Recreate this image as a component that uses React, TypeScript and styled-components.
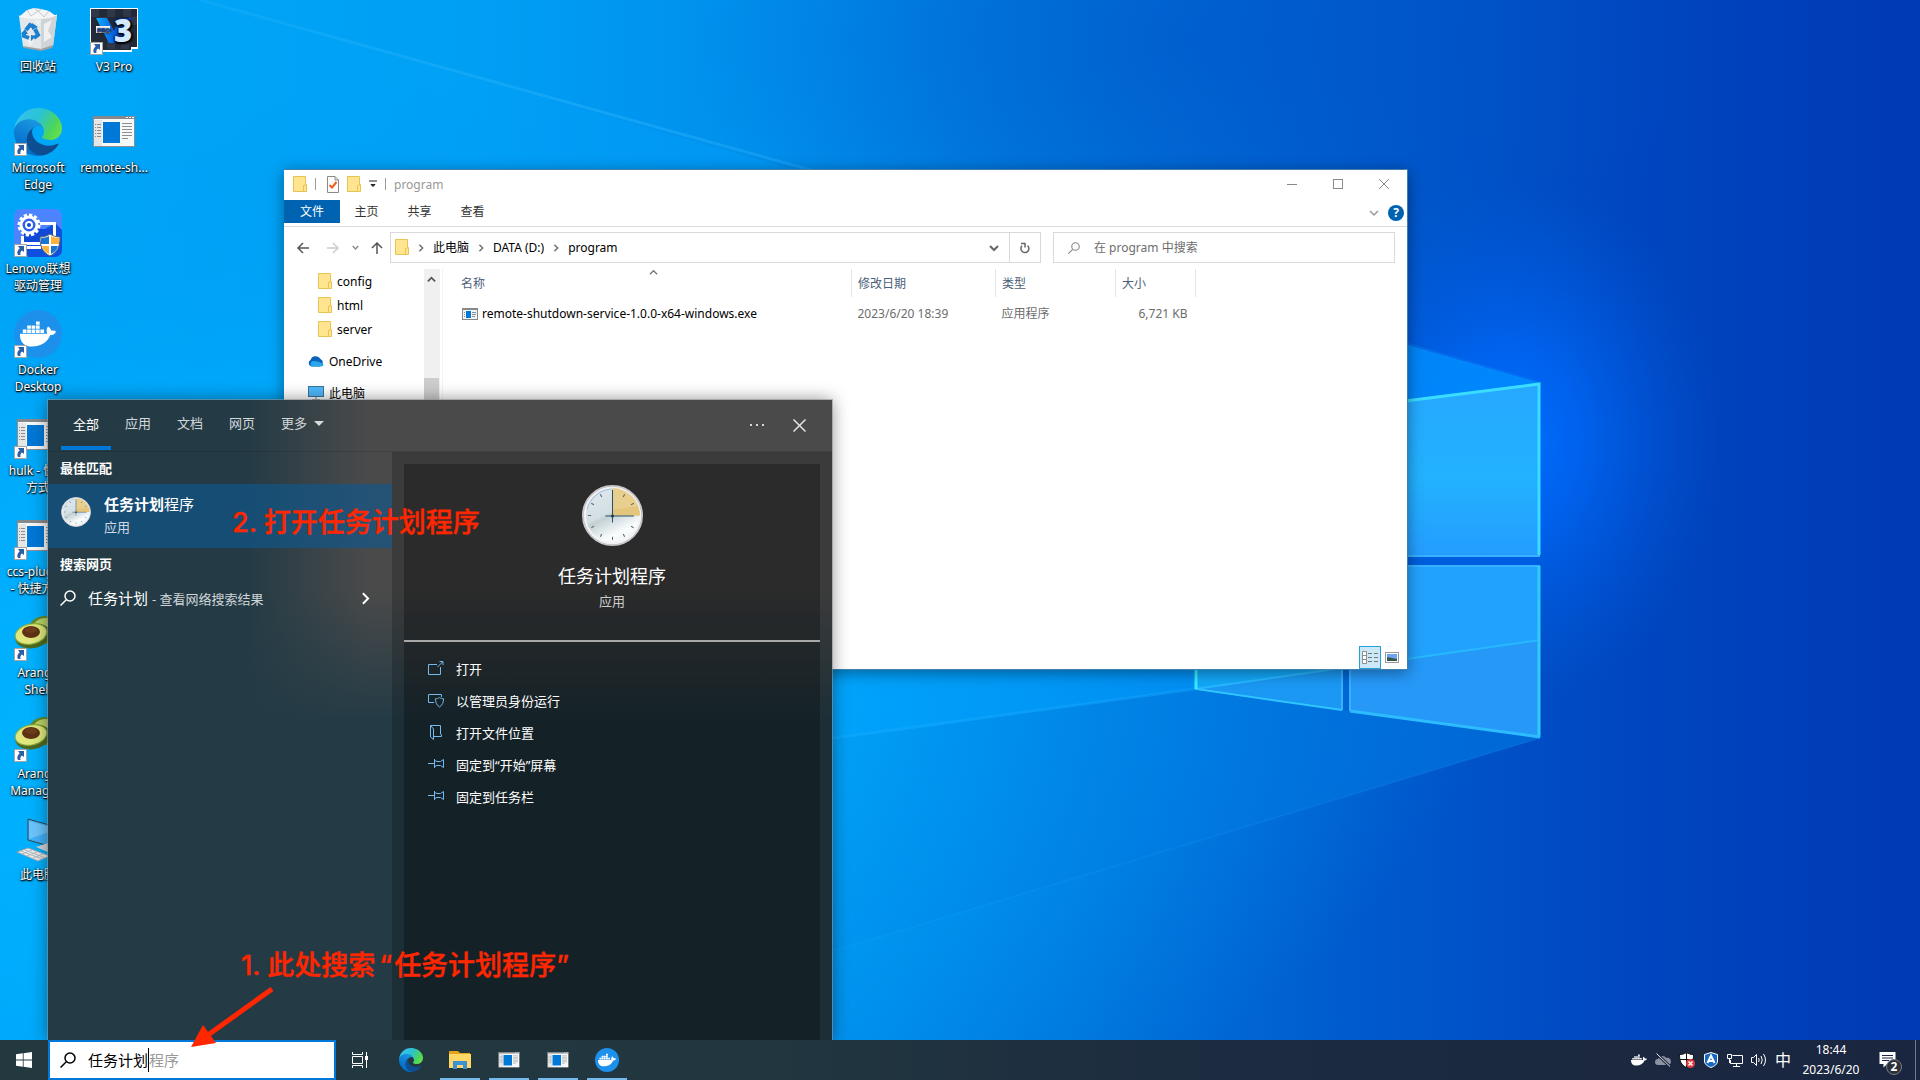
import React from 'react';
import styled, { createGlobalStyle } from 'styled-components';
import { FaDocker } from 'react-icons/fa';

const GlobalStyle = createGlobalStyle`
  *, *::before, *::after { box-sizing: border-box; }
  body { margin: 0; font-family: "Noto Sans", "Noto Sans CJK SC", sans-serif; font-size: 12px; line-height: 17px; overflow: hidden; }
  button, input { font: inherit; color: inherit; }
  button { background: none; border: 0; padding: 0; margin: 0; text-align: inherit; }
  svg { display: block; flex: none; }
`;

/* ---------- wallpaper ---------- */

const WallpaperSvg = styled.svg`
  position: absolute;
  inset: 0;
  width: 100%;
  height: 100%;
`;

const Wallpaper = () => (
  <WallpaperSvg viewBox="0 0 1920 1080" preserveAspectRatio="xMidYMid slice" aria-hidden="true">
    <defs>
      <linearGradient id="sky" x1="0" y1="0" x2="1" y2="0">
        <stop offset="0" stopColor="#00a8f8" />
        <stop offset="0.25" stopColor="#009ff4" />
        <stop offset="0.42" stopColor="#008cea" />
        <stop offset="0.55" stopColor="#0076dc" />
        <stop offset="0.7" stopColor="#005cce" />
        <stop offset="0.85" stopColor="#0046c0" />
        <stop offset="1" stopColor="#003ab4" />
      </linearGradient>
      <radialGradient id="leftLight" gradientUnits="userSpaceOnUse" cx="0" cy="0" r="1" gradientTransform="translate(260 720) rotate(-6) scale(1250 620)">
        <stop offset="0" stopColor="#00b6ff" />
        <stop offset="0.45" stopColor="#00acfd" stopOpacity="0.8" />
        <stop offset="1" stopColor="#0094f0" stopOpacity="0" />
      </radialGradient>
      <radialGradient id="glow" gradientUnits="userSpaceOnUse" cx="0" cy="0" r="1" gradientTransform="translate(1510 440) scale(210 270)">
        <stop offset="0" stopColor="#0070ff" />
        <stop offset="0.35" stopColor="#0066f6" stopOpacity="0.8" />
        <stop offset="1" stopColor="#0058d8" stopOpacity="0" />
      </radialGradient>
      <radialGradient id="topShade" gradientUnits="userSpaceOnUse" cx="0" cy="0" r="1" gradientTransform="translate(1200 40) scale(520 260)">
        <stop offset="0" stopColor="#0054c6" stopOpacity="0.5" />
        <stop offset="1" stopColor="#0054c6" stopOpacity="0" />
      </radialGradient>
      <linearGradient id="pane" x1="0" y1="0" x2="0" y2="1">
        <stop offset="0" stopColor="#26a8ff" />
        <stop offset="0.55" stopColor="#22b2ff" />
        <stop offset="1" stopColor="#249cff" />
      </linearGradient>
      <linearGradient id="beamTop" gradientUnits="userSpaceOnUse" x1="200" y1="0" x2="1540" y2="0">
        <stop offset="0" stopColor="#40c0ff" stopOpacity="0.15" />
        <stop offset="0.3" stopColor="#30b8ff" stopOpacity="0.4" />
        <stop offset="1" stopColor="#1090ff" stopOpacity="0.2" />
      </linearGradient>
      <linearGradient id="beamLow" gradientUnits="userSpaceOnUse" x1="700" y1="0" x2="1540" y2="0">
        <stop offset="0" stopColor="#0088e8" stopOpacity="0" />
        <stop offset="1" stopColor="#0074e0" stopOpacity="0.7" />
      </linearGradient>
      <linearGradient id="beamBody" gradientUnits="userSpaceOnUse" x1="200" y1="0" x2="1540" y2="0">
        <stop offset="0" stopColor="#00a8ff" stopOpacity="0" />
        <stop offset="0.6" stopColor="#00a0ff" stopOpacity="0.5" />
        <stop offset="1" stopColor="#008cff" stopOpacity="0.85" />
      </linearGradient>
    </defs>
    <rect width="1920" height="1080" fill="url(#sky)" />
    <rect width="1920" height="1080" fill="url(#leftLight)" />
    <rect width="1920" height="1080" fill="url(#topShade)" />
    <rect width="1920" height="1080" fill="url(#glow)" />
    <path d="M200 0 L1540 383 L1195 689 L0 860 V0Z" fill="url(#beamBody)" />
    <path d="M1540 738 L1195 689 L600 772 L836 950Z" fill="url(#beamLow)" />
    <path d="M200 0 L807 169 L1540 383" fill="none" stroke="url(#beamTop)" strokeWidth="3" />
    <path d="M1195 689 L833 738 L300 812" fill="none" stroke="#20b0ff" strokeOpacity="0.3" strokeWidth="3" />
    <path d="M1540 738 L836 950 L500 1052" fill="none" stroke="#30b0ff" strokeOpacity="0.12" strokeWidth="2" />
    <path d="M1350 407 L1540 384 V557 H1350Z" fill="url(#pane)" />
    <path d="M1350 565 H1540 V738 L1350 711Z" fill="#2698f8" />
    <path d="M1350 565 H1540 V640 L1350 668Z" fill="#22a2ff" />
    <path d="M1195 565 H1342 V710 L1195 689Z" fill="#1a98f4" />
    <path d="M1195 565 H1342 V669 L1195 689Z" fill="#12a8fa" />
    <path d="M1195 689 L1342 668 M1350 667 L1540 640" stroke="#28b8ff" strokeWidth="2" />
    <path d="M1350 556 H1540 M1350 566 H1540 M1342 600 V710 M1350 600 V711" stroke="#36b0ff" strokeWidth="2" />
    <path d="M1350 408 L1539 384 V555" fill="none" stroke="#3adcff" strokeWidth="3" />
    <path d="M1539 566 V737" fill="none" stroke="#30ccff" strokeWidth="3" />
    <path d="M1540 737 L1350 711" fill="none" stroke="#2cbcff" strokeWidth="3" />
    <path d="M1342 710 L1196 689 V600" fill="none" stroke="#2fc4ff" strokeWidth="2" />
    <path d="M1196 660 V689" stroke="#32f0ff" strokeWidth="3" />
  </WallpaperSvg>
);

/* ---------- drawings ---------- */

type SizeProps = { size?: number };

const EdgeLogo = ({ size = 48 }: SizeProps) => (
  <svg width={size} height={size} viewBox="0 0 256 256" aria-hidden="true">
    <defs>
      <linearGradient id="edgeA" x1="0.2" y1="0.5" x2="1" y2="0.6">
        <stop offset="0" stopColor="#0c4f94" />
        <stop offset="1" stopColor="#114a8b" />
      </linearGradient>
      <linearGradient id="edgeB" x1="0.7" y1="0" x2="0.3" y2="1">
        <stop offset="0" stopColor="#1b9de2" />
        <stop offset="0.5" stopColor="#0f7fd4" />
        <stop offset="1" stopColor="#0067bf" />
      </linearGradient>
      <linearGradient id="edgeC" x1="0" y1="0.3" x2="1" y2="0.7">
        <stop offset="0" stopColor="#35c1f1" />
        <stop offset="0.45" stopColor="#2bc3d2" />
        <stop offset="0.8" stopColor="#4bd55c" />
        <stop offset="1" stopColor="#66e04a" />
      </linearGradient>
    </defs>
    <path fill="url(#edgeA)" d="M231 190.5c-3.4 1.8-6.9 3.4-10.5 4.7a101.5 101.5 0 0 1-35.9 6.4c-47.3 0-88.5-32.5-88.5-74.3a31.5 31.5 0 0 1 16.4-27.3c-42.8 1.8-53.8 46.4-53.8 72.5 0 74 68.1 81.4 82.8 81.4 7.9 0 19.8-2.3 27-4.6l1.3-.4a128.3 128.3 0 0 0 66.6-52.8 4 4 0 0 0-5.4-5.6z" />
    <path fill="url(#edgeB)" d="M105.7 241.4a79.2 79.2 0 0 1-22.7-21.3 80.7 80.7 0 0 1 29.5-120c3.1-1.5 8.4-4.1 15.5-4a32.4 32.4 0 0 1 25.7 13 31.9 31.9 0 0 1 6.3 18.7c0-.2 24.5-79.6-80-79.6-43.9 0-80 41.6-80 78.2a130.2 130.2 0 0 0 12.1 56 128 128 0 0 0 156.4 67 75.6 75.6 0 0 1-62.8-8z" />
    <path fill="url(#edgeC)" d="M152.3 148.9c-.9 1-3.4 2.5-3.4 5.6 0 2.6 1.7 5.2 4.8 7.3 14.3 10 41.4 8.6 41.5 8.6a59.6 59.6 0 0 0 30.3-8.3 61.4 61.4 0 0 0 30.4-52.9c.3-22.4-8-37.3-11.3-43.9C223.5 23.9 177.7 0 128 0A128 128 0 0 0 0 126.2c.5-36.5 36.8-66 80-66 3.5 0 23.5.3 42 10a72.6 72.6 0 0 1 30.9 29.3c6.1 10.6 7.2 24.1 7.2 29.5s-2.7 13.3-7.8 19.9z" />
  </svg>
);

const RecycleBin = () => (
  <svg width="48" height="48" viewBox="0 0 48 48" aria-hidden="true">
    <path d="M6 9 L13 3 L20 1 L27 2 L35 4 L42 9 L38 12 H10Z" fill="#f4f5f6" />
    <path d="M13 3 L17 9 L24 4 L30 10 L35 4 M20 1 L24 4 L28 2" fill="none" stroke="#c3c8cc" />
    <path d="M5 9 L14 11 L34 11 L43 8 L39 39 L27 43 L9 40Z" fill="#e4e7e9" />
    <path d="M27 12 L43 8 L39 39 L27 43Z" fill="#cfd4d7" />
    <path d="M5 9 L14 11 L34 11 L43 8" fill="none" stroke="#f9f9f9" />
    <path d="M30 17 L38 13 L34 24 L38 30 L30 35Z M12 32 L20 35 L16 39Z M20 13 L25 20 L27 13Z" fill="#eef0f1" />
    <path d="M9 39 L27 42 L39 38 L38 41 L27 44 L10 41Z" fill="#9da1a4" />
    <g fill="none" stroke="#1c80cf" strokeWidth="4">
      <path d="M12 23 L16 18 L20 20" />
      <path d="M21 22 L24 28 L20 31" />
      <path d="M15 31 L10 29 L10 25" />
    </g>
    <path d="M18 16 L24 20 L18 23Z M22 29 L17 34 L17 28Z M7 27 L11 22 L14 27Z" fill="#1c80cf" />
  </svg>
);

const V3Logo = () => (
  <svg width="48" height="48" viewBox="0 0 48 48" aria-hidden="true">
    <defs>
      <linearGradient id="v3blue" x1="0" y1="0" x2="1" y2="0">
        <stop offset="0" stopColor="#08b0ff" />
        <stop offset="0.5" stopColor="#0a60e0" />
        <stop offset="1" stopColor="#0a3ccc" />
      </linearGradient>
    </defs>
    <path d="M0 1H48V42H42V45H0Z" fill="#fff" />
    <path d="M1 2H47V40H41V43H1Z" fill="#222a3a" />
    <path d="M1 2H9V10H1ZM17 2H25V10H17ZM33 2H41V10H33ZM9 10H17V18H9ZM39 10H47V18H39ZM1 34H9V42H1ZM17 34H25V42H17ZM31 34H39V42H31Z" fill="#2f3849" />
    <path d="M6 11 H17 L24 24 L30 11 H42 L27 36 H19Z" fill="url(#v3blue)" />
    <text x="24" y="35" fontFamily="Open Sans, sans-serif" fontSize="31" fontWeight="800" fill="#d4e9ff" stroke="#0a50d8" strokeWidth="1" paintOrder="stroke">3</text>
    <rect x="6" y="19" width="14" height="7" fill="#fff" />
    <text x="7" y="25" fontFamily="Liberation Sans, sans-serif" fontSize="6" fontWeight="700" fill="#0a48b4">PRO</text>
  </svg>
);

const AppWindow = ({ size = 48 }: SizeProps) => (
  <svg width={size} height={size} viewBox="0 0 48 48" aria-hidden="true">
    <rect x="3.5" y="8.5" width="41" height="30" fill="#f8f8f8" stroke="#8b8f92" />
    <rect x="3" y="8" width="42" height="3" fill="#85898c" />
    <path d="M36 9.500h2M39 9.500h2M42 9.500h2" stroke="#fff" />
    <rect x="4" y="12" width="8" height="26" fill="#e6e6e6" />
    <path d="M5 16.500h6M5 19.500h6M5 22.500h6M5 25.500h6M5 28.500h6" stroke="#8b8f92" strokeDasharray="1 1 4" />
    <rect x="13" y="14" width="17" height="21" fill="#0078d7" />
    <path d="M32 15.500h10M32 18.500h10M32 21.500h10M32 24.500h10M32 27.500h10M32 30.500h6" stroke="#8b8f92" />
  </svg>
);

const SmallAppWindow = ({ size = 16 }: SizeProps) => (
  <svg width={size} height={size} viewBox="0 0 16 16" aria-hidden="true">
    <rect x="0.500" y="2.500" width="15" height="11" fill="#f4f4f4" stroke="#85898c" />
    <rect x="0" y="2" width="16" height="2" fill="#85898c" />
    <rect x="4" y="5" width="5" height="7" fill="#0078d7" />
    <path d="M2 6.500h1M2 8.500h1M2 10.500h1M10 6.500h4M10 8.500h4M10 10.500h3" stroke="#8b8f92" />
  </svg>
);

const LenovoLogo = () => (
  <svg width="48" height="48" viewBox="0 0 48 48" aria-hidden="true">
    <rect width="48" height="48" rx="7" fill="#4c84ff" />
    <path d="M41 14 L48 21 V41 a7 7 0 0 1-7 7 H14 L8 34Z" fill="#0f4fe0" />
    <path d="M26 14.500H40.500V37M8.500 27V34.500H27M8 38.500H27M22 14.500" fill="none" stroke="#fff" strokeWidth="3" />
    <path d="M10 20 H39 V33 H10Z" fill="#1048d8" />
    <circle cx="15" cy="16" r="10" fill="none" stroke="#fff" strokeWidth="3" strokeDasharray="3.200 2" />
    <circle cx="15" cy="16" r="8" fill="#2f62e8" stroke="#fff" strokeWidth="3" />
    <circle cx="15" cy="16" r="3" fill="#1048d8" stroke="#fff" strokeWidth="2" />
    <path d="M36 25c3 2 6 3 10 3 0 9-2 15-10 19-8-4-10-10-10-19 4 0 7-1 10-3z" fill="#fff" stroke="#58606c" />
    <path d="M35 27v8h-8c0-2 0-4 0-6 3 0 6-1 8-2z M37 37h7c-1 4-3 6-7 8z" fill="#1976d0" />
    <path d="M37 27c2 1 5 2 8 2v6h-8z M35 37v8c-4-2-6-4-7-8z" fill="#fbb33a" />
  </svg>
);

const DockerCircle = styled.span<{ $size: number }>`
  display: grid;
  place-items: center;
  width: ${(p) => p.$size}px;
  height: ${(p) => p.$size}px;
  border-radius: 50%;
  background: #1d90ec;
  color: #fff;
`;

const DockerLogo = ({ size = 48 }: SizeProps) => (
  <DockerCircle $size={size}>
    <FaDocker size={Math.round(size * 0.76)} />
  </DockerCircle>
);

const Avocado = () => (
  <svg width="48" height="48" viewBox="0 0 48 48" aria-hidden="true">
    <ellipse cx="30" cy="17" rx="16" ry="14" fill="#5f8a2c" transform="rotate(-12 30 17)" />
    <ellipse cx="31" cy="16" rx="13" ry="11" fill="#bcd266" transform="rotate(-12 31 16)" />
    <ellipse cx="19" cy="23" rx="18" ry="12" fill="#4d6a22" transform="rotate(-14 19 23)" />
    <ellipse cx="17" cy="21" rx="16" ry="10" fill="#dfe77e" stroke="#8faf3c" strokeWidth="1" transform="rotate(-12 17 21)" />
    <ellipse cx="17" cy="19" rx="9" ry="6" fill="#5e3213" />
    <ellipse cx="17" cy="17" rx="6" ry="3" fill="#6d3d1a" />
  </svg>
);

const Computer = () => (
  <svg width="48" height="48" viewBox="0 0 48 48" aria-hidden="true">
    <path d="M14 4 L46 13 V34 L14 25Z" fill="#3fb0f8" stroke="#37454f" />
    <path d="M15 6 L44 14 L15 24Z" fill="#6bc4fb" />
    <path d="M22 32 L34 28 L46 32 L34 37Z" fill="#d2d6d9" />
    <path d="M3 37 L14 33 L36 41 L24 46Z" fill="#e8ebed" stroke="#9fa5aa" />
    <path d="M7 36 L28 44 M11 35 L31 43 M8 39 L18 35 M13 41 L23 37 M19 43 L29 39" stroke="#b3b9bd" />
  </svg>
);

const ShortcutMark = styled.svg`
  position: absolute;
  left: 0;
  bottom: 0;
`;

const Shortcut = () => (
  <ShortcutMark width="13" height="13" viewBox="0 0 13 13" aria-hidden="true">
    <rect x="0.500" y="0.500" width="12" height="12" fill="#fff" stroke="#a5a5a5" />
    <path d="M4 2h6v6L8 6.500C6.500 7.500 6 9 6.500 11H4C2.500 8.500 3.500 6 5.700 4.500Z" fill="#2d5fa8" />
  </ShortcutMark>
);

const Folder = () => (
  <svg width="14" height="17" viewBox="0 0 14 17" aria-hidden="true">
    <path d="M0.500 0.500H12.500V15.500H0.500Z" fill="#ffe590" stroke="#e9c254" />
    <path d="M10.500 9.500L13.500 8.500V15.500H10.500Z" fill="#ffe590" stroke="#e9c254" />
  </svg>
);

const CheckedPage = () => (
  <svg width="12" height="17" viewBox="0 0 12 17" aria-hidden="true">
    <path d="M0.500 0.500H8L11.500 4V16.500H0.500Z" fill="#fdfdfd" stroke="#8a8a8a" />
    <path d="M8 0.500V4H11.500" fill="none" stroke="#8a8a8a" />
    <path d="M2.500 9L5 11.500L9.500 6" fill="none" stroke="#e8601c" strokeWidth="2" />
  </svg>
);

const OneDrive = () => (
  <svg width="16" height="12" viewBox="0 0 16 12" aria-hidden="true">
    <path d="M3.500 11.500A3.500 3.500 0 0 1 2.500 5 A5.500 5.500 0 0 1 12.500 4 A4 4 0 0 1 12 11.500Z" fill="#0a63b8" />
    <path d="M4 11.500 A3 3 0 0 1 5 6 L10 6.500 L15.500 9 A2.500 2.500 0 0 1 13 11.500Z" fill="#28a8ea" />
  </svg>
);

const SmallPc = () => (
  <svg width="16" height="14" viewBox="0 0 16 14" aria-hidden="true">
    <rect x="0.500" y="0.500" width="15" height="10" fill="#4fb8fb" stroke="#3a7399" />
    <path d="M4 13.500h8M8 11v2" stroke="#6b7d88" />
  </svg>
);

const Chevron = ({ dir, size = 8, color = '#5c5c5c', weight = 1.5 }: { dir: 'up' | 'down' | 'right'; size?: number; color?: string; weight?: number }) => {
  const d = { up: 'M1 7L5 3L9 7', down: 'M1 3L5 7L9 3', right: 'M3 1L7 5L3 9' }[dir];
  return (
    <svg width={size} height={size} viewBox="0 0 10 10" aria-hidden="true">
      <path d={d} fill="none" stroke={color} strokeWidth={weight} />
    </svg>
  );
};

const Arrow = ({ dir, color }: { dir: 'left' | 'right' | 'up'; color: string }) => {
  const d = { left: 'M12 6H1M6 1L1 6L6 11', right: 'M0 6H11M6 1L11 6L6 11', up: 'M6 12V1M1 6L6 1L11 6' }[dir];
  return (
    <svg width="12" height="12" viewBox="0 0 12 12" aria-hidden="true">
      <path d={d} fill="none" stroke={color} strokeWidth="1.5" />
    </svg>
  );
};

const Magnifier = ({ size, color, weight = 1.5 }: { size: number; color: string; weight?: number }) => (
  <svg width={size} height={size} viewBox="0 0 16 16" aria-hidden="true">
    <circle cx="10" cy="6" r="5" fill="none" stroke={color} strokeWidth={weight} />
    <path d="M6.300 9.700L0.500 15.500" stroke={color} strokeWidth={weight} />
  </svg>
);

const Clock = ({ size }: { size: number }) => (
  <svg width={size} height={size} viewBox="0 0 60 60" aria-hidden="true">
    <defs>
      <linearGradient id="face" x1="0.200" y1="0" x2="0.700" y2="1">
        <stop offset="0" stopColor="#dfe9f0" />
        <stop offset="0.45" stopColor="#d4dfe3" />
        <stop offset="0.5" stopColor="#c2d0d4" />
        <stop offset="0.8" stopColor="#fbfdfe" />
        <stop offset="1" stopColor="#e9f1f4" />
      </linearGradient>
    </defs>
    <circle cx="30" cy="30" r="29" fill="url(#face)" stroke="#c9c6ca" strokeWidth="2" />
    <circle cx="30" cy="30" r="27" fill="none" stroke="#f3f3f6" strokeWidth="2" />
    <path d="M5 24A26 26 0 0 1 30 4" fill="none" stroke="#a5bfdc" strokeWidth="1" />
    <path d="M30 30V3A27 27 0 0 1 57 30Z" fill="#e8cf8e" />
    <path d="M30 30V24L55 21 A27 27 0 0 1 57 30Z" fill="#e3c67c" />
    {[1, 2, 4, 5, 6, 7, 8, 9, 10, 11].map((h) => (
      <path key={h} d="M30 6V9" stroke="#52646e" strokeWidth="1" transform={`rotate(${h * 30} 30 30)`} />
    ))}
    <path d="M30 5V37M23 30.500H51" stroke="#2c5068" strokeWidth="1" />
    <circle cx="30" cy="30.500" r="1.500" fill="#1d3c52" />
  </svg>
);

/* ---------- desktop ---------- */

const Screen = styled.div`
  position: relative;
  display: flex;
  flex-direction: column;
  height: 100vh;
  overflow: hidden;
  background: #0080e0;
`;

const Workspace = styled.main`
  position: relative;
  flex: 1;
  min-height: 0;
`;

const IconGrid = styled.ul`
  display: grid;
  grid-auto-flow: column;
  grid-template-rows: repeat(9, 101px);
  grid-auto-columns: 76px;
  justify-content: start;
  margin: 0;
  padding: 7px 0 0;
  list-style: none;
`;

const DesktopItem = styled.button`
  display: flex;
  flex-direction: column;
  align-items: center;
  gap: 3px;
  width: 76px;
  color: #fff;
  text-align: center;
  white-space: pre;
  text-shadow: 1px 1px 2px #000, 0 1px 1px rgba(0, 0, 0, 0.8), 0 0 3px rgba(0, 0, 0, 0.6);
`;

const IconBox = styled.span`
  position: relative;
  display: block;
  height: 48px;
`;

const desktopItems = [
  { label: '回收站', icon: <RecycleBin /> },
  { label: 'Microsoft\nEdge', icon: <EdgeLogo />, link: true },
  { label: 'Lenovo联想\n驱动管理', icon: <LenovoLogo />, link: true },
  { label: 'Docker\nDesktop', icon: <DockerLogo />, link: true },
  { label: 'hulk - 快捷\n方式', icon: <AppWindow />, link: true },
  { label: 'ccs-plugins\n- 快捷方式', icon: <AppWindow />, link: true },
  { label: 'Arango\nShell', icon: <Avocado />, link: true },
  { label: 'Arango\nManage...', icon: <Avocado />, link: true },
  { label: '此电脑', icon: <Computer /> },
  { label: 'V3 Pro', icon: <V3Logo />, link: true },
  { label: 'remote-sh...', icon: <AppWindow /> },
];

/* ---------- file explorer ---------- */

const Explorer = styled.section`
  position: absolute;
  left: 284px;
  top: 169px;
  width: 1124px;
  height: 501px;
  display: flex;
  flex-direction: column;
  background: #fff;
  border: 1px solid #3f7fae;
  border-width: 1px 1px 1px 0;
  box-shadow: 0 3px 14px rgba(0, 0, 0, 0.4);
  color: #000;
`;

const TitleBar = styled.header`
  display: flex;
  align-items: center;
  height: 30px;
  padding: 0 0 2px 9px;
  color: #999;
`;

const QuickAccess = styled.div`
  display: flex;
  align-items: center;
  gap: 8px;
  flex: 1;
`;

const Rule = styled.span<{ $gap?: number }>`
  width: 1px;
  height: 12px;
  margin-right: ${(p) => p.$gap ?? 0}px;
  background: #9a9a9a;
`;

const WindowButton = styled.button`
  display: grid;
  place-items: center;
  width: 46px;
  height: 28px;
`;

const Ribbon = styled.nav`
  display: flex;
  align-items: flex-start;
  height: 27px;
  border-bottom: 1px solid #dadbdc;
`;

const RibbonTab = styled.button<{ $primary?: boolean }>`
  width: ${(p) => (p.$primary ? 56 : 53)}px;
  height: 23px;
  text-align: center;
  color: ${(p) => (p.$primary ? '#fff' : '#333')};
  background: ${(p) => (p.$primary ? '#0063b1' : 'transparent')};
`;

const RibbonTools = styled.div`
  display: flex;
  align-items: center;
  gap: 9px;
  height: 25px;
  margin-left: auto;
  padding-right: 3px;
`;

const Help = styled.button`
  width: 16px;
  height: 16px;
  border-radius: 50%;
  background: #0063b1;
  color: #fff;
  font-weight: 700;
  line-height: 16px;
  text-align: center;
`;

const AddressRow = styled.div`
  display: flex;
  align-items: center;
  padding: 5px 12px 6px 13px;
`;

const NavButtons = styled.div`
  display: flex;
  align-items: center;
  width: 93px;
  gap: 12px;
`;

const NavButton = styled.button`
  display: grid;
  place-items: center;
  min-width: 8px;
  &:first-child { margin-right: 6px; }
`;

const AddressBar = styled.div`
  display: flex;
  align-items: center;
  flex: 1;
  height: 31px;
  border: 1px solid #d9d9d9;
  padding-left: 4px;
`;

const Crumbs = styled.div`
  display: flex;
  align-items: center;
  gap: 8px;
  flex: 1;
`;

const BarButton = styled.button<{ $divided?: boolean }>`
  display: grid;
  place-items: center;
  width: 31px;
  height: 29px;
  border-left: ${(p) => (p.$divided ? '1px solid #d9d9d9' : '0')};
`;

const SearchField = styled.label`
  display: flex;
  align-items: center;
  gap: 14px;
  width: 342px;
  height: 31px;
  margin-left: 12px;
  padding-left: 14px;
  border: 1px solid #d9d9d9;
  input { flex: 1; min-width: 0; padding: 0; border: 0; outline: 0; color: #6d6d6d; background: none; }
  input::placeholder { color: #6d6d6d; opacity: 1; }
`;

const ExplorerBody = styled.div`
  display: flex;
  flex: 1;
  min-height: 0;
`;

const Tree = styled.nav`
  display: flex;
  flex-direction: column;
  gap: 8px;
  width: 140px;
`;

const TreeGroup = styled.div<{ $nested?: boolean }>`
  display: flex;
  flex-direction: column;
  padding-left: ${(p) => (p.$nested ? 34 : 24)}px;
`;

const TreeItem = styled.button`
  display: flex;
  align-items: center;
  gap: 5px;
  height: 24px;
`;

const ScrollTrack = styled.div`
  display: flex;
  flex-direction: column;
  gap: 94px;
  width: 16px;
  padding-top: 6px;
  background: #f0f0f0;
  svg { margin-left: 3px; }
`;

const ScrollThumb = styled.div`
  width: 15px;
  height: 110px;
  background: #cdcdcd;
`;

const FilePane = styled.div`
  display: flex;
  flex-direction: column;
  justify-content: space-between;
  flex: 1;
  margin-left: 2px;
  border-left: 1px solid #f3f3f3;
  padding-left: 12px;
`;

const FileTable = styled.table`
  width: 741px;
  table-layout: fixed;
  border-collapse: collapse;
  th, td { padding: 0 6px; font-weight: 400; text-align: left; white-space: nowrap; }
  th { position: relative; height: 28px; border-right: 1px solid #e5e5e5; color: #4c607a; }
  td { height: 33px; color: #6d6d6d; }
  td:first-child { color: #000; padding-left: 7px; }
  td:last-child { text-align: right; padding-right: 8px; }
`;

const SortMark = styled.span`
  position: absolute;
  inset: -1px 0 auto;
  display: flex;
  justify-content: center;
`;

const FileName = styled.span`
  display: flex;
  align-items: center;
  gap: 4px;
`;

const ViewBar = styled.div`
  display: flex;
  justify-content: flex-end;
  padding-right: 4px;
`;

const ViewButton = styled.button<{ $active?: boolean }>`
  display: grid;
  place-items: center;
  width: 22px;
  height: 23px;
  border: ${(p) => (p.$active ? '1px solid #26a0da' : '0')};
  background: ${(p) => (p.$active ? '#cbe8f6' : 'transparent')};
`;

const FileExplorer = () => (
  <Explorer aria-label="program">
    <TitleBar>
      <QuickAccess>
        <Folder />
        <Rule $gap={3} />
        <CheckedPage />
        <Folder />
        <svg width="8" height="8" viewBox="0 0 8 8" aria-hidden="true">
          <path d="M0 1h8M2 4.500h4L4 6.500z" fill="#222" stroke="#222" strokeWidth="1" />
        </svg>
        <Rule />
        <span>program</span>
      </QuickAccess>
      <WindowButton aria-label="最小化">
        <svg width="10" height="10"><path d="M0 5.500h10" stroke="#888" /></svg>
      </WindowButton>
      <WindowButton aria-label="最大化">
        <svg width="10" height="10"><rect x="0.500" y="0.500" width="9" height="9" fill="none" stroke="#888" /></svg>
      </WindowButton>
      <WindowButton aria-label="关闭">
        <svg width="10" height="10"><path d="M0 0L10 10M10 0L0 10" stroke="#888" /></svg>
      </WindowButton>
    </TitleBar>
    <Ribbon>
      <RibbonTab $primary>文件</RibbonTab>
      <RibbonTab>主页</RibbonTab>
      <RibbonTab>共享</RibbonTab>
      <RibbonTab>查看</RibbonTab>
      <RibbonTools>
        <Chevron dir="down" size={10} color="#999" />
        <Help aria-label="帮助">?</Help>
      </RibbonTools>
    </Ribbon>
    <AddressRow>
      <NavButtons>
        <NavButton aria-label="后退"><Arrow dir="left" color="#555" /></NavButton>
        <NavButton aria-label="前进"><Arrow dir="right" color="#ccc" /></NavButton>
        <NavButton aria-label="最近"><Chevron dir="down" size={7} color="#888" weight={2} /></NavButton>
        <NavButton aria-label="上移"><Arrow dir="up" color="#555" /></NavButton>
      </NavButtons>
      <AddressBar>
        <Crumbs>
          <Folder />
          <Chevron dir="right" color="#777" weight={2} />
          <span>此电脑</span>
          <Chevron dir="right" color="#777" weight={2} />
          <span>DATA (D:)</span>
          <Chevron dir="right" color="#777" weight={2} />
          <span>program</span>
        </Crumbs>
        <BarButton aria-label="历史"><Chevron dir="down" size={10} color="#666" weight={2} /></BarButton>
        <BarButton $divided aria-label="刷新">
          <svg width="12" height="12" viewBox="0 0 12 12">
            <path d="M8.500 3.500A4 4 0 1 1 3 3.800" fill="none" stroke="#666" strokeWidth="1.500" />
            <path d="M2 1.500H6V5.500" fill="none" stroke="#666" strokeWidth="1.500" />
          </svg>
        </BarButton>
      </AddressBar>
      <SearchField>
        <Magnifier size={12} color="#888" />
        <input type="text" aria-label="搜索" placeholder="在 program 中搜索" />
      </SearchField>
    </AddressRow>
    <ExplorerBody>
      <Tree>
        <TreeGroup $nested>
          {['config', 'html', 'server'].map((name) => (
            <TreeItem key={name}><Folder />{name}</TreeItem>
          ))}
        </TreeGroup>
        <TreeGroup><TreeItem><OneDrive />OneDrive</TreeItem></TreeGroup>
        <TreeGroup><TreeItem><SmallPc />此电脑</TreeItem></TreeGroup>
      </Tree>
      <ScrollTrack>
        <Chevron dir="up" size={9} color="#555" weight={2} />
        <ScrollThumb />
      </ScrollTrack>
      <FilePane>
        <FileTable>
          <colgroup>
            <col />
            <col width="144" />
            <col width="120" />
            <col width="80" />
          </colgroup>
          <thead>
            <tr>
              <th>名称<SortMark><Chevron dir="up" size={9} color="#777" /></SortMark></th>
              <th>修改日期</th>
              <th>类型</th>
              <th>大小</th>
            </tr>
          </thead>
          <tbody>
            <tr>
              <td><FileName><SmallAppWindow />remote-shutdown-service-1.0.0-x64-windows.exe</FileName></td>
              <td>2023/6/20 18:39</td>
              <td>应用程序</td>
              <td>6,721 KB</td>
            </tr>
          </tbody>
        </FileTable>
        <ViewBar>
          <ViewButton $active aria-label="详细信息">
            <svg width="16" height="13" viewBox="0 0 16 13">
              <path d="M0.500 0.500h4v12h-4zM0 4.500h5M0 8.500h5" fill="#fff" stroke="#8f8f8f" />
              <path d="M6 2.500h4M12 2.500h4M6 6.500h4M12 6.500h4M6 10.500h4M12 10.500h4" stroke="#777" />
            </svg>
          </ViewButton>
          <ViewButton aria-label="大图标">
            <svg width="14" height="11" viewBox="0 0 14 11">
              <rect x="0.500" y="0.500" width="13" height="10" fill="#fff" stroke="#999" />
              <rect x="2" y="2" width="10" height="7" fill="#6fa4f0" />
              <path d="M2 5L7 6L12 7V9H2Z" fill="#35574f" />
            </svg>
          </ViewButton>
        </ViewBar>
      </FilePane>
    </ExplorerBody>
  </Explorer>
);

/* ---------- start search ---------- */

const SearchPanel = styled.section`
  position: absolute;
  left: 48px;
  bottom: 0;
  width: 784px;
  height: 640px;
  display: flex;
  flex-direction: column;
  color: #fff;
  font-size: 13px;
  line-height: 20px;
  background:
    linear-gradient(to bottom, rgba(36, 59, 69, 0) 190px, #243b45 320px),
    linear-gradient(to right, #243b45 200px, #4a4a4a 320px);
  box-shadow: 0 0 0 1px rgba(140, 150, 155, 0.6), 0 0 16px rgba(0, 0, 0, 0.45);
`;

const Scopes = styled.nav`
  display: flex;
  align-items: stretch;
  gap: 2px;
  height: 52px;
  padding: 0 12px 1px 13px;
  border-bottom: 1px solid rgba(0, 0, 0, 0.12);
`;

const Scope = styled.button<{ $active?: boolean }>`
  display: flex;
  align-items: center;
  gap: 7px;
  padding: ${(p) => (p.$active ? '2px 12px 0' : '0 12px')};
  color: ${(p) => (p.$active ? '#fff' : '#d2d7d9')};
  border-bottom: 4px solid ${(p) => (p.$active ? '#0078d7' : 'transparent')};
`;

const PanelTools = styled.div`
  display: flex;
  margin-left: auto;
  color: #e0e0e0;
`;

const PanelTool = styled.button`
  display: grid;
  place-items: center;
  width: 42px;
`;

const PanelBody = styled.div`
  display: flex;
  flex: 1;
`;

const Results = styled.div`
  width: 344px;
`;

const GroupTitle = styled.h2`
  margin: 0;
  padding-left: 12px;
  font-size: 13px;
  font-weight: 700;
  line-height: 32px;
`;

const BestMatch = styled.button`
  display: flex;
  align-items: flex-start;
  gap: 13px;
  width: 100%;
  height: 64px;
  padding: 9px 13px;
  background: rgba(16, 88, 142, 0.65);
  svg { margin-top: 4px; }
`;

const Stack = styled.span`
  display: flex;
  flex-direction: column;
  line-height: 23px;
  color: #d0dae0;
`;

const ResultName = styled.span`
  font-size: 15px;
  color: #fff;
`;

const WebResult = styled.button`
  display: flex;
  align-items: center;
  gap: 12px;
  width: 100%;
  height: 36px;
  padding: 0 20px 0 12px;
  color: #cfd5d8;
`;

const WebText = styled.span`
  flex: 1;
`;

const Preview = styled.div`
  flex: 1;
  display: flex;
  padding: 12px 12px 0;
  background: rgba(0, 0, 0, 0.2);
`;

const PreviewCard = styled.article`
  flex: 1;
  background: rgba(0, 0, 0, 0.27);
`;

const AppSummary = styled.header`
  display: flex;
  flex-direction: column;
  align-items: center;
  height: 178px;
  padding-top: 21px;
  border-bottom: 2px solid #a8a8a8;
  color: #ccc;
  h1 { margin: 16px 0 1px; font-size: 18px; font-weight: 400; line-height: 28px; color: #fff; }
`;

const Actions = styled.ul`
  margin: 0;
  padding: 11px 0 0;
  list-style: none;
`;

const Action = styled.button`
  display: flex;
  align-items: center;
  gap: 12px;
  width: 100%;
  height: 32px;
  padding-left: 24px;
`;

const actionIcons = {
  open: 'M12.500 6V13.500H0.500V3.500H9M9.500 6L14.500 1M11.500 0.500H15V4',
  admin: 'M6 9.500H0.500V1.500H13.500V4M11.500 4.500C13 5.500 14 5.700 15.500 5.700C15.500 9.500 14.500 12 11.500 14C8.500 12 7.500 9.500 7.500 5.700C9 5.700 10 5.500 11.500 4.500Z',
  folder: 'M5 11.500H13.500V10L12.500 9V0.500H2.500V12L5.500 14.500V4L2.500 0.500',
  pin: 'M0 6.500H6.500M6.500 2V11M6.500 3.500L9 4.500H12.500L15.500 2.500V10.500L12.500 8.500H9L6.500 9.500',
};

const actions: { icon: keyof typeof actionIcons; label: string }[] = [
  { icon: 'open', label: '打开' },
  { icon: 'admin', label: '以管理员身份运行' },
  { icon: 'folder', label: '打开文件位置' },
  { icon: 'pin', label: '固定到“开始”屏幕' },
  { icon: 'pin', label: '固定到任务栏' },
];

const StartSearch = () => (
  <SearchPanel aria-label="搜索">
    <Scopes>
      <Scope $active>全部</Scope>
      <Scope>应用</Scope>
      <Scope>文档</Scope>
      <Scope>网页</Scope>
      <Scope>
        更多
        <svg width="10" height="5"><path d="M0 0H10L5 5Z" fill="#d6dadb" /></svg>
      </Scope>
      <PanelTools>
        <PanelTool aria-label="选项">
          <svg width="14" height="2"><path d="M0 0h2v2H0zM6 0h2v2H6zM12 0h2v2h-2z" fill="#d8d8d8" /></svg>
        </PanelTool>
        <PanelTool aria-label="关闭">
          <svg width="13" height="13"><path d="M0.500 0.500L12.500 12.500M12.500 0.500L0.500 12.500" stroke="#e4e4e4" strokeWidth="1.500" /></svg>
        </PanelTool>
      </PanelTools>
    </Scopes>
    <PanelBody>
      <Results>
        <GroupTitle>最佳匹配</GroupTitle>
        <BestMatch>
          <Clock size={30} />
          <Stack>
            <ResultName><b>任务计划</b>程序</ResultName>
            <span>应用</span>
          </Stack>
        </BestMatch>
        <GroupTitle>搜索网页</GroupTitle>
        <WebResult>
          <Magnifier size={16} color="#fff" />
          <WebText><ResultName>任务计划 </ResultName>- 查看网络搜索结果</WebText>
          <Chevron dir="right" size={13} color="#fff" />
        </WebResult>
      </Results>
      <Preview>
        <PreviewCard>
          <AppSummary>
            <Clock size={61} />
            <h1>任务计划程序</h1>
            <span>应用</span>
          </AppSummary>
          <Actions>
            {actions.map((a) => (
              <li key={a.label}>
                <Action>
                  <svg width="16" height="16" viewBox="0 0 16 16" aria-hidden="true">
                    <path d={actionIcons[a.icon]} fill="none" stroke="#76b9ed" />
                  </svg>
                  {a.label}
                </Action>
              </li>
            ))}
          </Actions>
        </PreviewCard>
      </Preview>
    </PanelBody>
  </SearchPanel>
);

/* ---------- notes drawn over the desktop ---------- */

const Note = styled.p<{ $x: number; $y: number }>`
  position: absolute;
  left: ${(p) => p.$x}px;
  top: ${(p) => p.$y}px;
  margin: 0;
  color: #ff2600;
  font-family: Inter, "Noto Sans CJK SC", sans-serif;
  font-size: 27px;
  font-weight: 500;
  line-height: 36px;
  white-space: nowrap;
  -webkit-text-stroke: 0.4px #ff2600;
`;

const Quote = styled.span<{ $closing?: boolean }>`
  margin: ${(p) => (p.$closing ? '0' : '0 2px 0 4px')};
`;

const Pointer = styled.svg`
  position: absolute;
  left: 190px;
  top: 984px;
`;

/* ---------- taskbar ---------- */

const Taskbar = styled.footer`
  position: relative;
  display: flex;
  height: 40px;
  color: #fff;
  background: linear-gradient(to right, #23393f 0%, #21363f 40%, #1c2b40 65%, #1a2640 100%);
`;

const TaskButton = styled.button<{ $open?: boolean }>`
  display: grid;
  place-items: center;
  width: 48px;
  height: 40px;
  position: relative;
  &::after {
    content: '';
    position: absolute;
    left: 4px;
    right: 4px;
    bottom: 0;
    height: 2px;
    background: ${(p) => (p.$open ? '#76b9ed' : 'transparent')};
  }
`;

const TaskSearch = styled.label`
  display: flex;
  align-items: center;
  width: 288px;
  height: 40px;
  padding-left: 10px;
  border: 2px solid #0078d7;
  background: #fff;
  font-size: 15px;
  line-height: 24px;
  svg { margin-right: 12px; }
  input { width: 60px; height: 24px; padding: 0; border: 0; outline: 0; color: #000; background: none; }
`;

const Completion = styled.span`
  height: 24px;
  border-left: 1px solid #000;
  color: #999;
`;

const Apps = styled.div`
  display: flex;
  gap: 1px;
  margin-left: 3px;
`;

const Tray = styled.div`
  display: flex;
  align-items: center;
  gap: 8px;
  margin-left: auto;
`;

const TrayButton = styled.button`
  display: grid;
  place-items: center;
  width: 16px;
  height: 40px;
  font-size: 16px;
`;

const DateTime = styled.time`
  display: flex;
  flex-direction: column;
  width: 64px;
  text-align: center;
  line-height: 20px;
`;

const Notifications = styled.button`
  position: relative;
  display: flex;
  align-items: center;
  width: 36px;
  height: 40px;
  padding-left: 8px;
`;

const Badge = styled.span`
  position: absolute;
  right: 5px;
  bottom: 5px;
  width: 16px;
  height: 16px;
  border: 1px solid #777d88;
  border-radius: 50%;
  background: #2b2f36;
  font-weight: 700;
  line-height: 14px;
  text-align: center;
`;

const ShowDesktop = styled.button`
  width: 5px;
  height: 40px;
  border-left: 1px solid #737b8a;
`;

export default function App() {
  return (
    <Screen>
      <GlobalStyle />
      <Wallpaper />
      <Workspace>
        <IconGrid>
          {desktopItems.map((item, i) => (
            <li key={i}>
              <DesktopItem>
                <IconBox>
                  {item.icon}
                  {item.link && <Shortcut />}
                </IconBox>
                {item.label}
              </DesktopItem>
            </li>
          ))}
        </IconGrid>
        <FileExplorer />
        <StartSearch />
        <Note $x={232} $y={505}>2. 打开任务计划程序</Note>
        <Note $x={241} $y={948}>1. 此处搜索<Quote>“</Quote>任务计划程序<Quote $closing>”</Quote></Note>
      </Workspace>
      <Taskbar>
        <TaskButton aria-label="开始">
          <svg width="16" height="16" viewBox="0 0 16 16">
            <path d="M0 2.300L6.800 1.300V7.600H0ZM7.600 1.200L16 0V7.600H7.600ZM0 8.400H6.800V14.700L0 13.700ZM7.600 8.400H16V16L7.600 14.800Z" fill="#fff" />
          </svg>
        </TaskButton>
        <TaskSearch>
          <Magnifier size={16} color="#000" />
          <input type="text" aria-label="搜索" defaultValue="任务计划" />
          <Completion>程序</Completion>
        </TaskSearch>
        <TaskButton aria-label="任务视图">
          <svg width="16" height="16" viewBox="0 0 16 16">
            <path d="M0.500 0V2.500H10.500V0M0.500 16V13.500H10.500V16M0.500 4.500H10.500V11.500H0.500ZM14.500 0V4M14.500 8V16" fill="none" stroke="#fff" />
            <rect x="13" y="4" width="3" height="4" fill="#fff" />
          </svg>
        </TaskButton>
        <Apps>
          <TaskButton aria-label="Microsoft Edge"><EdgeLogo size={24} /></TaskButton>
          <TaskButton $open aria-label="文件资源管理器">
            <svg width="22" height="18" viewBox="0 0 22 18">
              <path d="M0 0H9L11 2H21V5H0Z" fill="#e3a21a" />
              <path d="M0 3H22V17H0Z" fill="#ffd766" />
              <path d="M4 18V10H18V18H14V14H8V18Z" fill="#3e92d4" />
            </svg>
          </TaskButton>
          <TaskButton $open aria-label="应用"><AppWindow size={24} /></TaskButton>
          <TaskButton $open aria-label="应用"><AppWindow size={24} /></TaskButton>
          <TaskButton $open aria-label="Docker"><DockerLogo size={24} /></TaskButton>
        </Apps>
        <Tray>
          <TrayButton aria-label="Docker"><FaDocker size={16} /></TrayButton>
          <TrayButton aria-label="OneDrive">
            <svg width="16" height="14" viewBox="0 0 16 14">
              <path d="M3 12A3 3 0 0 1 3 6A5 5 0 0 1 11.500 5A3.500 3.500 0 0 1 13 12Z" fill="#8b92a0" />
              <path d="M1.500 0.500L15 13.500" stroke="#1a2640" strokeWidth="3" />
              <path d="M1.500 0.500L15 13.500" stroke="#e6e8ec" />
            </svg>
          </TrayButton>
          <TrayButton aria-label="安全">
            <svg width="16" height="16" viewBox="0 0 16 16">
              <path d="M7.500 0.500C10 2 12 2.500 14.500 2.500C14.500 9 13 13 7.500 15.500C2 13 0.500 9 0.500 2.500C3 2.500 5 2 7.500 0.500Z" fill="#fff" stroke="#111" />
              <path d="M7.500 1V15M1 7.500H14" stroke="#111" strokeWidth="1" />
              <circle cx="11.500" cy="11.500" r="4.500" fill="#e03a3a" />
              <path d="M9.500 9.500L13.500 13.500M13.500 9.500L9.500 13.500" stroke="#fff" strokeWidth="1.500" />
            </svg>
          </TrayButton>
          <TrayButton aria-label="杀毒">
            <svg width="14" height="16" viewBox="0 0 14 16">
              <path d="M7 0.500L13.500 2.500V9C13.500 12 11 14 7 15.500C3 14 0.500 12 0.500 9V2.500Z" fill="#1667c4" stroke="#fff" />
              <path d="M3.500 11L7 3.500L10.500 11M4.500 9H9.500" fill="none" stroke="#fff" strokeWidth="2" />
            </svg>
          </TrayButton>
          <TrayButton aria-label="网络">
            <svg width="16" height="14" viewBox="0 0 16 14">
              <path d="M5.500 2.500H15.500V10.500H3.500V7M6 13.500H13M9.500 10.500V13.500M0.500 1.500H4.500V5.500H0.500ZM2.500 5.500V10" fill="none" stroke="#fff" />
            </svg>
          </TrayButton>
          <TrayButton aria-label="音量">
            <svg width="16" height="14" viewBox="0 0 16 14">
              <path d="M0.500 4.500H2.500L5.500 1.500V12.500L2.500 9.500H0.500ZM7.500 5Q9 7 7.500 9M10 3Q12.500 7 10 11M12.500 1Q16.500 7 12.500 13" fill="none" stroke="#fff" />
            </svg>
          </TrayButton>
          <TrayButton aria-label="输入法">中</TrayButton>
          <DateTime>
            <span>18:44</span>
            <span>2023/6/20</span>
          </DateTime>
          <Notifications aria-label="通知">
            <svg width="17" height="16" viewBox="0 0 17 16">
              <path d="M0.500 0H16.500V12H8L4.500 15.500V12H0.500Z" fill="#fff" />
              <path d="M3 3.500H14M3 6H14M3 8.500H10" stroke="#1a2640" />
            </svg>
            <Badge>2</Badge>
          </Notifications>
          <ShowDesktop aria-label="显示桌面" />
        </Tray>
      </Taskbar>
      <Pointer width="90" height="70" viewBox="0 0 90 70" aria-hidden="true">
        <path d="M82 5L18 51" stroke="#ff2600" strokeWidth="5" />
        <path d="M1 63L13 41L26 59Z" fill="#ff2600" />
      </Pointer>
    </Screen>
  );
}
